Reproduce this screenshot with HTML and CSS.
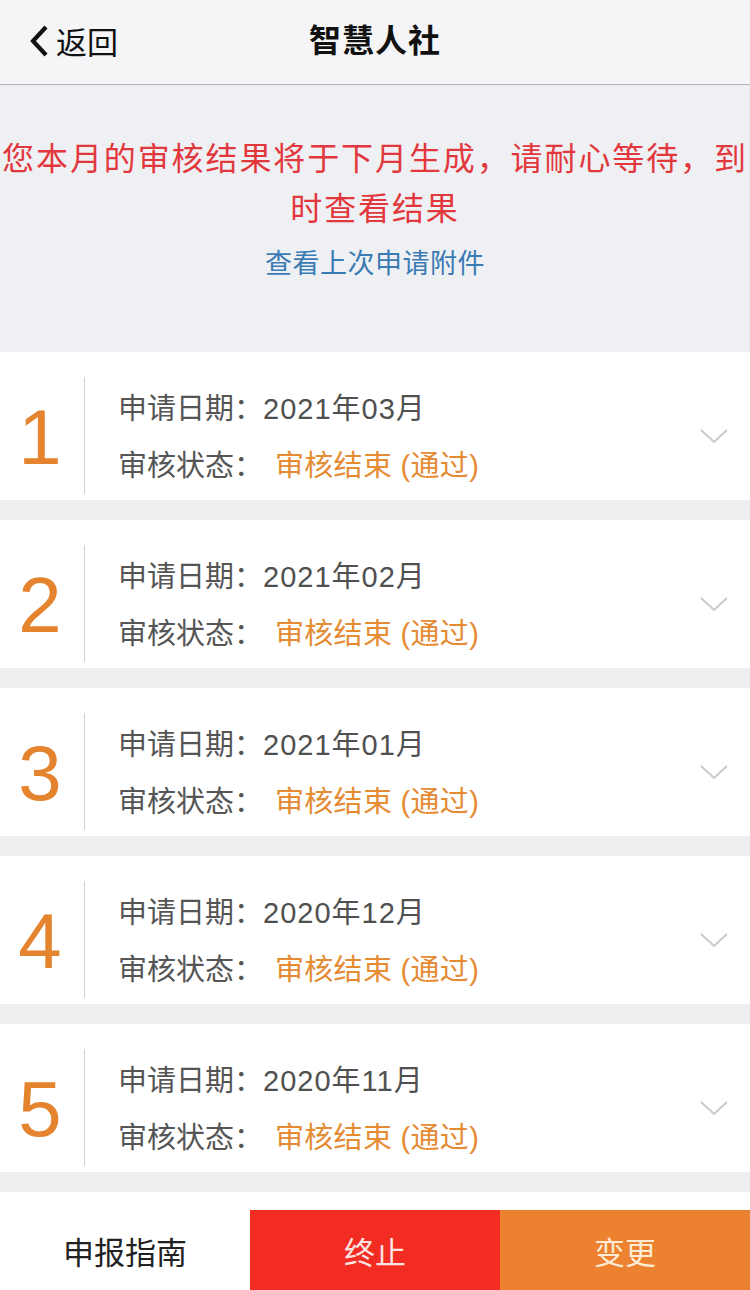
FILE: index.html
```html
<!DOCTYPE html>
<html lang="zh-CN">
<head>
<meta charset="utf-8">
<title>智慧人社</title>
<link rel="stylesheet" href="styles.css">
</head>
<body>
<header class="nav">
  <div class="back">
    <svg class="back-icon" viewBox="0 0 22 34" width="22" height="34"><path d="M18 3 L5 17 L18 31" fill="none" stroke="#111" stroke-width="4.2" stroke-linejoin="miter"/></svg>
    <span>返回</span>
  </div>
  <h1 class="title">智慧人社</h1>
</header>

<section class="notice">
  <p class="notice-text">您本月的审核结果将于下月生成，请耐心等待，到时查看结果</p>
  <a class="notice-link">查看上次申请附件</a>
</section>

<main class="list">
  <div class="card">
    <div class="num">1</div>
    <div class="info">
      <div class="line"><span class="label">申请日期：</span><span class="val">2021年03月</span></div>
      <div class="line"><span class="label">审核状态：</span><span class="status">审核结束 (通过)</span></div>
    </div>
    <svg class="chev" viewBox="0 0 30 16" width="30" height="16"><path d="M2 2 L15 14 L28 2" fill="none" stroke="#c9c9cd" stroke-width="2"/></svg>
  </div>
  <div class="card">
    <div class="num">2</div>
    <div class="info">
      <div class="line"><span class="label">申请日期：</span><span class="val">2021年02月</span></div>
      <div class="line"><span class="label">审核状态：</span><span class="status">审核结束 (通过)</span></div>
    </div>
    <svg class="chev" viewBox="0 0 30 16" width="30" height="16"><path d="M2 2 L15 14 L28 2" fill="none" stroke="#c9c9cd" stroke-width="2"/></svg>
  </div>
  <div class="card">
    <div class="num">3</div>
    <div class="info">
      <div class="line"><span class="label">申请日期：</span><span class="val">2021年01月</span></div>
      <div class="line"><span class="label">审核状态：</span><span class="status">审核结束 (通过)</span></div>
    </div>
    <svg class="chev" viewBox="0 0 30 16" width="30" height="16"><path d="M2 2 L15 14 L28 2" fill="none" stroke="#c9c9cd" stroke-width="2"/></svg>
  </div>
  <div class="card">
    <div class="num">4</div>
    <div class="info">
      <div class="line"><span class="label">申请日期：</span><span class="val">2020年12月</span></div>
      <div class="line"><span class="label">审核状态：</span><span class="status">审核结束 (通过)</span></div>
    </div>
    <svg class="chev" viewBox="0 0 30 16" width="30" height="16"><path d="M2 2 L15 14 L28 2" fill="none" stroke="#c9c9cd" stroke-width="2"/></svg>
  </div>
  <div class="card">
    <div class="num">5</div>
    <div class="info">
      <div class="line"><span class="label">申请日期：</span><span class="val">2020年11月</span></div>
      <div class="line"><span class="label">审核状态：</span><span class="status">审核结束 (通过)</span></div>
    </div>
    <svg class="chev" viewBox="0 0 30 16" width="30" height="16"><path d="M2 2 L15 14 L28 2" fill="none" stroke="#c9c9cd" stroke-width="2"/></svg>
  </div>
</main>

<footer class="bar">
  <div class="btn guide">申报指南</div>
  <div class="btn stop">终止</div>
  <div class="btn change">变更</div>
</footer>
</body>
</html>
```

FILE: styles.css
```css
* { box-sizing: border-box; }
html, body {
  margin: 0;
  padding: 0;
}
body {
  width: 750px;
  height: 1290px;
  overflow: hidden;
  background: #eeeef1;
  font-family: "Liberation Sans", "Noto Sans CJK SC", sans-serif;
}
.nav {
  height: 85px;
  background: #f5f5f7;
  border-bottom: 1px solid #b4b4b8;
  display: flex;
  align-items: center;
  justify-content: center;
  position: relative;
}
.back {
  position: absolute;
  left: 28px;
  top: 24px;
  display: flex;
  align-items: center;
  gap: 6px;
  font-family: "Noto Sans CJK SC", sans-serif;
  font-size: 31px;
  color: #111;
  line-height: 34px;
}
.back-icon { display: block; }
.title {
  margin: 0;
  font-family: "Noto Sans CJK SC", sans-serif;
  font-size: 32px;
  font-weight: 700;
  color: #111;
  letter-spacing: 1px;
  margin-top: -9px;
}
.notice {
  height: 267px;
  background: #eff0f4;
  text-align: center;
  padding-top: 46px;
  font-family: "Noto Sans CJK SC", sans-serif;
}
.notice-text {
  margin: 0 auto;
  width: 750px;
  font-size: 32px;
  line-height: 50px;
  letter-spacing: 1.9px;
  color: #e2383d;
}
.notice-link {
  display: block;
  margin-top: 14px;
  font-size: 27px;
  line-height: 34px;
  color: #3b7bb4;
  letter-spacing: 0.5px;
}
.list {
  display: flex;
  flex-direction: column;
  gap: 20px;
}
.card {
  height: 148px;
  background: #fff;
  display: flex;
  align-items: stretch;
  padding: 25px 0 6px 0;
  position: relative;
}
.num {
  width: 85px;
  flex: none;
  border-right: 1.5px solid #cfcfd2;
  display: flex;
  align-items: center;
  justify-content: center;
  padding-right: 4px;
  padding-top: 2px;
  font-family: "Liberation Sans", sans-serif;
  font-size: 78px;
  line-height: 1;
  color: #e5842f;
}
.info {
  flex: 1;
  padding-left: 33px;
  display: flex;
  flex-direction: column;
  justify-content: center;
  font-family: "Noto Sans CJK SC", sans-serif;
  font-size: 29px;
  color: #555;
}
.line {
  line-height: 54px;
  white-space: nowrap;
}
.val {
  font-family: "Liberation Sans", "Noto Sans CJK SC", sans-serif;
  color: #505050;
  letter-spacing: 1px;
}
.status {
  margin-left: 12px;
  color: #e48b33;
  font-family: "Liberation Sans", "Noto Sans CJK SC", sans-serif;
  letter-spacing: 0.3px;
}
.chev {
  position: absolute;
  right: 21px;
  top: 76px;
}
.bar {
  margin-top: 20px;
  height: 98px;
  background: #fff;
  padding-top: 18px;
  display: grid;
  grid-template-columns: 250px 250px 250px;
  font-family: "Noto Sans CJK SC", sans-serif;
  font-size: 31px;
}
.btn {
  height: 80px;
  display: flex;
  align-items: center;
  justify-content: center;
}
.guide { color: #222; }
.stop { background: #f22c23; color: #fde4e2; }
.change { background: #ec8130; color: #fdebd3; }
```
